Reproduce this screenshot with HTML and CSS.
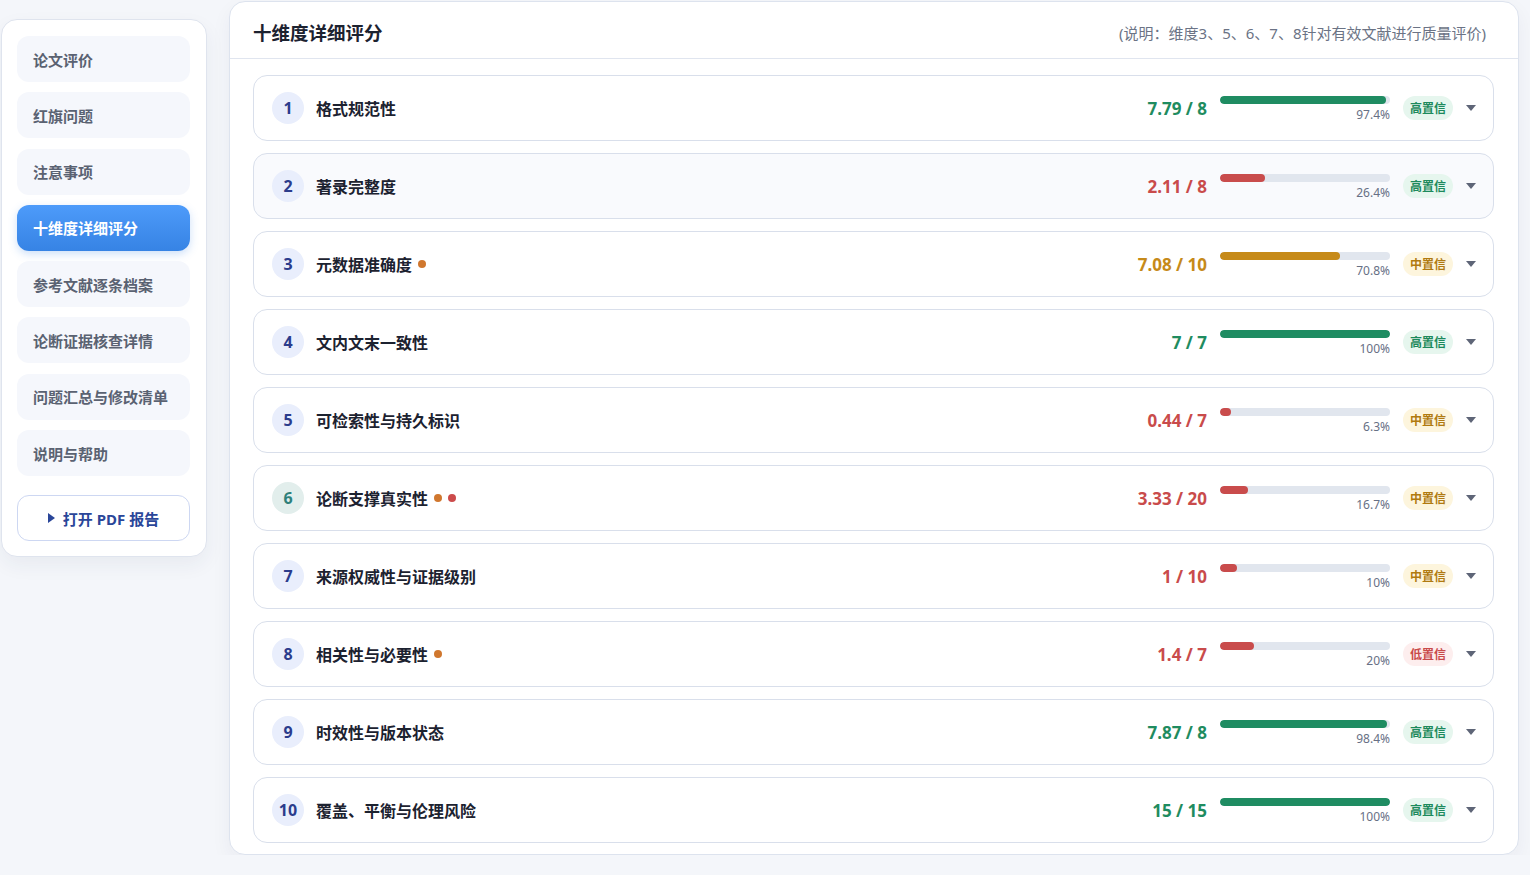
FILE: index.html
```html
<!DOCTYPE html>
<html lang="zh-CN">
<head>
    <meta charset="UTF-8">
    <meta name="viewport" content="width=device-width, initial-scale=1.0">
    <title>十维度详细评分</title>
    <link rel="stylesheet" href="styles.css">
</head>
<body>
    <div class="layout">
        <!-- 侧边导航 -->
        <nav class="sidebar">
            <a class="sidebar__item">论文评价</a>
            <a class="sidebar__item">红旗问题</a>
            <a class="sidebar__item">注意事项</a>
            <a class="sidebar__item sidebar__item--active">十维度详细评分</a>
            <a class="sidebar__item">参考文献逐条档案</a>
            <a class="sidebar__item">论断证据核查详情</a>
            <a class="sidebar__item">问题汇总与修改清单</a>
            <a class="sidebar__item">说明与帮助</a>
            <button class="sidebar__pdf"><span class="sidebar__pdf-arrow"></span>打开 PDF 报告</button>
        </nav>

        <!-- 评分面板 -->
        <main class="panel">
            <header class="panel__header">
                <h1 class="panel__title">十维度详细评分</h1>
                <span class="panel__note">(说明：维度3、5、6、7、8针对有效文献进行质量评价)</span>
            </header>

            <div class="panel__list">
                <div class="dim">
                    <span class="dim__num">1</span>
                    <span class="dim__name">格式规范性</span>
                    <span class="dim__score good">7.79 / 8</span>
                    <div class="dim__bar"><div class="dim__track"><div class="dim__fill good" style="width:97.4%"></div></div><span class="dim__pct">97.4%</span></div>
                    <span class="badge badge--high">高置信</span>
                    <span class="dim__caret"></span>
                </div>
                <div class="dim dim--hover">
                    <span class="dim__num">2</span>
                    <span class="dim__name">著录完整度</span>
                    <span class="dim__score bad">2.11 / 8</span>
                    <div class="dim__bar"><div class="dim__track"><div class="dim__fill bad" style="width:26.4%"></div></div><span class="dim__pct">26.4%</span></div>
                    <span class="badge badge--high">高置信</span>
                    <span class="dim__caret"></span>
                </div>
                <div class="dim">
                    <span class="dim__num">3</span>
                    <span class="dim__name">元数据准确度<i class="dot dot--orange"></i></span>
                    <span class="dim__score mid">7.08 / 10</span>
                    <div class="dim__bar"><div class="dim__track"><div class="dim__fill mid" style="width:70.8%"></div></div><span class="dim__pct">70.8%</span></div>
                    <span class="badge badge--mid">中置信</span>
                    <span class="dim__caret"></span>
                </div>
                <div class="dim">
                    <span class="dim__num">4</span>
                    <span class="dim__name">文内文末一致性</span>
                    <span class="dim__score good">7 / 7</span>
                    <div class="dim__bar"><div class="dim__track"><div class="dim__fill good" style="width:100%"></div></div><span class="dim__pct">100%</span></div>
                    <span class="badge badge--high">高置信</span>
                    <span class="dim__caret"></span>
                </div>
                <div class="dim">
                    <span class="dim__num">5</span>
                    <span class="dim__name">可检索性与持久标识</span>
                    <span class="dim__score bad">0.44 / 7</span>
                    <div class="dim__bar"><div class="dim__track"><div class="dim__fill bad" style="width:6.3%"></div></div><span class="dim__pct">6.3%</span></div>
                    <span class="badge badge--mid">中置信</span>
                    <span class="dim__caret"></span>
                </div>
                <div class="dim">
                    <span class="dim__num dim__num--teal">6</span>
                    <span class="dim__name">论断支撑真实性<i class="dot dot--orange"></i><i class="dot dot--red"></i></span>
                    <span class="dim__score bad">3.33 / 20</span>
                    <div class="dim__bar"><div class="dim__track"><div class="dim__fill bad" style="width:16.7%"></div></div><span class="dim__pct">16.7%</span></div>
                    <span class="badge badge--mid">中置信</span>
                    <span class="dim__caret"></span>
                </div>
                <div class="dim">
                    <span class="dim__num">7</span>
                    <span class="dim__name">来源权威性与证据级别</span>
                    <span class="dim__score bad">1 / 10</span>
                    <div class="dim__bar"><div class="dim__track"><div class="dim__fill bad" style="width:10%"></div></div><span class="dim__pct">10%</span></div>
                    <span class="badge badge--mid">中置信</span>
                    <span class="dim__caret"></span>
                </div>
                <div class="dim">
                    <span class="dim__num">8</span>
                    <span class="dim__name">相关性与必要性<i class="dot dot--orange"></i></span>
                    <span class="dim__score bad">1.4 / 7</span>
                    <div class="dim__bar"><div class="dim__track"><div class="dim__fill bad" style="width:20%"></div></div><span class="dim__pct">20%</span></div>
                    <span class="badge badge--low">低置信</span>
                    <span class="dim__caret"></span>
                </div>
                <div class="dim">
                    <span class="dim__num">9</span>
                    <span class="dim__name">时效性与版本状态</span>
                    <span class="dim__score good">7.87 / 8</span>
                    <div class="dim__bar"><div class="dim__track"><div class="dim__fill good" style="width:98.4%"></div></div><span class="dim__pct">98.4%</span></div>
                    <span class="badge badge--high">高置信</span>
                    <span class="dim__caret"></span>
                </div>
                <div class="dim">
                    <span class="dim__num">10</span>
                    <span class="dim__name">覆盖、平衡与伦理风险</span>
                    <span class="dim__score good">15 / 15</span>
                    <div class="dim__bar"><div class="dim__track"><div class="dim__fill good" style="width:100%"></div></div><span class="dim__pct">100%</span></div>
                    <span class="badge badge--high">高置信</span>
                    <span class="dim__caret"></span>
                </div>
            </div>
        </main>
    </div>
</body>
</html>
```

FILE: styles.css
```css
body {
    margin: 0;
    padding: 0;
    background: #f4f6fa;
    font-family: "Noto Sans", "Noto Sans CJK SC", sans-serif;
    color: #1c2230;
}

.layout {
    display: flex;
    align-items: flex-start;
    gap: 22px;
    padding: 1px 0 0 1px;
}

/* 侧边导航 */
.sidebar {
    width: 206px;
    box-sizing: border-box;
    margin-top: 18px;
    padding: 16px 16px 15px 15px;
    background: #ffffff;
    border: 1px solid #dfe4ee;
    border-radius: 16px;
    box-shadow: 0 8px 20px rgba(30, 45, 80, 0.06);
    display: flex;
    flex-direction: column;
    gap: 10.3px;
}

.sidebar__item {
    height: 46px;
    display: flex;
    align-items: center;
    padding-left: 16px;
    background: #f5f7fc;
    border-radius: 12px;
    font-size: 15px;
    font-weight: bold;
    color: #5a6272;
    cursor: pointer;
}

.sidebar__item--active {
    background: linear-gradient(180deg, #4d9bfa, #3683e4);
    color: #ffffff;
    box-shadow: 0 3px 8px rgba(55, 130, 230, 0.25);
}

.sidebar__pdf {
    margin-top: 8.7px;
    height: 46px;
    background: #ffffff;
    border: 1px solid #cdd7f2;
    border-radius: 12px;
    font-family: inherit;
    font-size: 15px;
    font-weight: bold;
    color: #2a4699;
    display: flex;
    align-items: center;
    justify-content: center;
    gap: 8px;
    cursor: pointer;
}

.sidebar__pdf-arrow {
    width: 0;
    height: 0;
    border-top: 5px solid transparent;
    border-bottom: 5px solid transparent;
    border-left: 7px solid #2a4699;
}

/* 评分面板 */
.panel {
    width: 1290px;
    box-sizing: border-box;
    background: #ffffff;
    border: 1px solid #dde3ee;
    border-radius: 16px;
    box-shadow: 0 8px 20px rgba(30, 45, 80, 0.05);
}

.panel__header {
    height: 57px;
    box-sizing: border-box;
    display: flex;
    align-items: center;
    justify-content: space-between;
    padding: 4px 32px 0 23px;
    border-bottom: 1px solid #e0e5ef;
}

.panel__title {
    margin: 0;
    font-size: 18.5px;
    font-weight: bold;
    color: #1c2230;
}

.panel__note {
    font-size: 15px;
    color: #6b7385;
}

.panel__list {
    display: flex;
    flex-direction: column;
    gap: 12px;
    padding: 16px 24px 11px 23px;
}

.dim {
    height: 66px;
    box-sizing: border-box;
    display: flex;
    align-items: center;
    padding: 0 17px 0 18px;
    border: 1px solid #d9dfeb;
    border-radius: 14px;
    background: #ffffff;
}

.dim--hover {
    background: #f9fafd;
}

.dim__num {
    width: 32px;
    height: 32px;
    flex-shrink: 0;
    border-radius: 50%;
    background: #e9eefc;
    color: #2b3c8c;
    font-size: 16px;
    font-weight: bold;
    display: flex;
    align-items: center;
    justify-content: center;
}

.dim__num--teal {
    background: #e2eeec;
    color: #2e807a;
}

.dim__name {
    margin-left: 12px;
    font-size: 16px;
    font-weight: bold;
    color: #1c2230;
    flex: 1;
    display: flex;
    align-items: center;
}

.dot {
    width: 8px;
    height: 8px;
    border-radius: 50%;
    margin-left: 6px;
    display: inline-block;
}

.dot--orange {
    background: #d0772e;
}

.dot--red {
    background: #cc4b4b;
}

.dim__score {
    font-size: 17px;
    font-weight: bold;
}

.good { color: #1f8c60; }
.bad { color: #c94b4b; }
.mid { color: #c68a19; }

.dim__bar {
    width: 170px;
    margin-left: 13px;
    display: flex;
    flex-direction: column;
    align-items: flex-end;
    padding-top: 2px;
}

.dim__track {
    width: 100%;
    height: 8px;
    border-radius: 4px;
    background: #e1e6ee;
    overflow: hidden;
}

.dim__fill {
    height: 100%;
    border-radius: 4px;
}

.dim__fill.good { background: #1f8c62; }
.dim__fill.bad { background: #c94c4c; }
.dim__fill.mid { background: #c68a19; }

.dim__pct {
    margin-top: 3px;
    font-size: 12px;
    line-height: 16px;
    color: #677085;
}

.badge {
    margin-left: 13px;
    width: 50px;
    height: 24px;
    border-radius: 12px;
    font-size: 12px;
    font-weight: bold;
    display: flex;
    align-items: center;
    justify-content: center;
}

.badge--high {
    background: #e6f6ee;
    color: #1d8a5c;
}

.badge--mid {
    background: #fdf5dd;
    color: #b07a10;
}

.badge--low {
    background: #fdeeee;
    color: #c94a4a;
}

.dim__caret {
    margin-left: 13px;
    width: 0;
    height: 0;
    border-left: 5px solid transparent;
    border-right: 5px solid transparent;
    border-top: 6px solid #5e6577;
}
```
